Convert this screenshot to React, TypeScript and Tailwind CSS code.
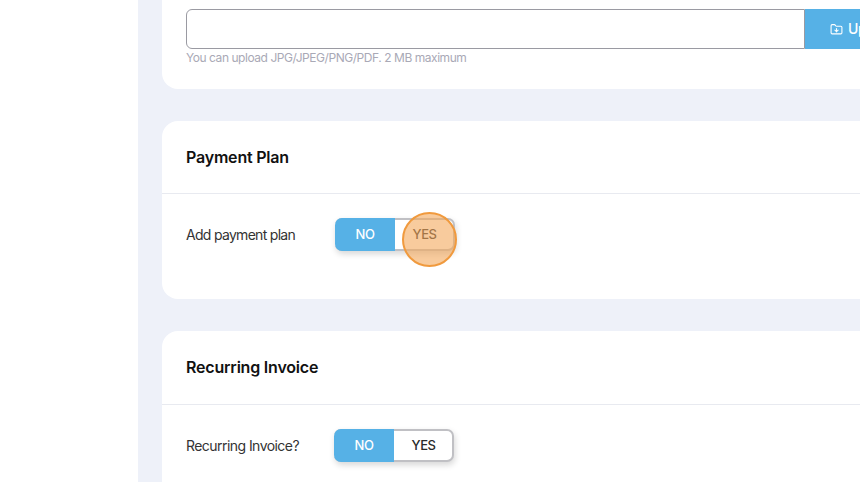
import { FolderDown } from "lucide-react";

function YesNo({ highlight, className }: { highlight?: boolean; className?: string }) {
  return (
    <div className={"relative flex h-[33px] w-[120px] rounded-[7px] border-y-2 border-r-2 border-[#c0c0c4] bg-white shadow-[1px_3px_6px_rgba(0,0,0,0.16)] " + (className ?? "")}>
      <div className="-my-0.5 flex w-[60px] items-center justify-center rounded-l-[7px] bg-[#56b1e6] text-[13px] font-medium tracking-[-0.3px] text-white">
        NO
      </div>
      <div className="flex flex-1 items-center justify-center rounded-r-[7px] pl-px text-[13px] font-medium tracking-[-0.5px] text-[#2a2a2a]">
        YES
      </div>
      {highlight && (
        <div className="absolute left-[67px] top-[-8px] h-[55px] w-[55px] rounded-full border-2 border-[#f09a3e] bg-[#f4a95c]/60" />
      )}
    </div>
  );
}

export default function App() {
  return (
    <div className="flex h-[482px] w-[860px] overflow-hidden bg-white font-['Inter',sans-serif]">
      <div className="w-[138px] shrink-0 bg-white" />
      <main className="flex flex-1 flex-col gap-8 overflow-hidden bg-[#eef1f9] pl-6">
        <div className="h-[89px] w-[760px] shrink-0 rounded-bl-2xl bg-white pl-6 pt-[9px]">
          <div className="flex h-10">
            <div className="w-[619px] rounded-l-md border border-[#9a9aa2] bg-white" />
            <div className="flex flex-1 items-center gap-[5px] bg-[#56b1e6] pl-[25px] text-sm font-medium tracking-[-0.3px] whitespace-nowrap text-white">
              <FolderDown size={13} className="shrink-0" />
              Upload
            </div>
          </div>
          <p className="mt-px text-xs tracking-[-0.45px] text-[#a9a9b6]">You can upload JPG/JPEG/PNG/PDF. 2 MB maximum</p>
        </div>

        <div className="w-[760px] shrink-0 rounded-l-2xl bg-white">
          <div className="flex h-[73px] items-center border-b border-[#e8eaf0] pl-6 text-base font-semibold tracking-[-0.2px] text-[#111]">
            Payment Plan
          </div>
          <div className="flex h-[105px] pl-6 pt-6">
            <div className="flex h-[33px] w-[149px] items-center text-sm tracking-[-0.7px] text-[#333]">Add payment plan</div>
            <YesNo highlight />
          </div>
        </div>

        <div className="w-[760px] shrink-0 rounded-l-2xl bg-white">
          <div className="flex h-[74px] items-center border-b border-[#e8eaf0] pl-6 pb-px text-base font-semibold tracking-[-0.2px] text-[#111]">
            Recurring Invoice
          </div>
          <div className="flex h-[105px] pl-6 pt-6">
            <div className="flex h-[33px] w-[148px] items-center text-sm tracking-[-0.55px] text-[#333]">Recurring Invoice?</div>
            <YesNo />
          </div>
        </div>
      </main>
    </div>
  );
}
